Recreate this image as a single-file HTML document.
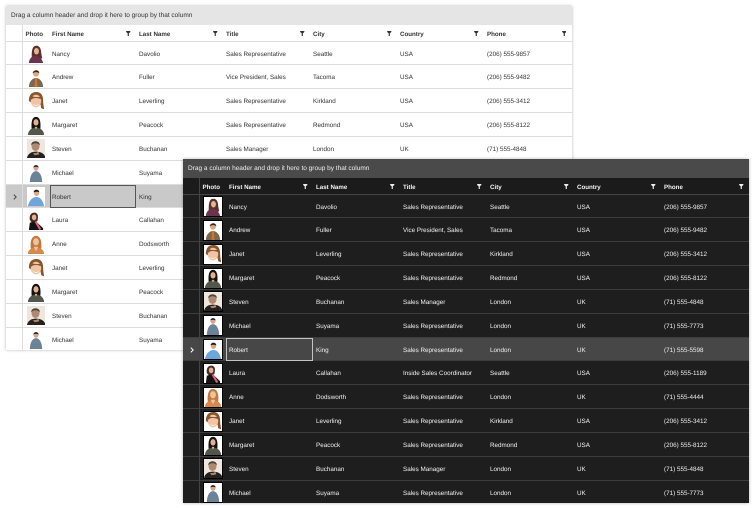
<!DOCTYPE html>
<html><head><meta charset="utf-8"><style>
html,body{margin:0;padding:0;width:754px;height:508px;overflow:hidden;background:#fff}
body{position:relative;font-family:"Liberation Sans",sans-serif;font-size:6.3px;line-height:10px;text-rendering:geometricPrecision}
.g{position:absolute;width:566px;height:344px;overflow:hidden;white-space:nowrap}
.l{left:6px;top:6px;background:#fff;color:#333;box-shadow:0 0 3px rgba(0,0,0,.28)}
.d{left:183px;top:159px;background:#1e1e1e;color:#f0f0f0;box-shadow:0 0 3px rgba(0,0,0,.3)}
.p{position:absolute;left:0;top:0;width:566px;height:18.5px;line-height:20px;text-indent:5px;font-size:6.5px}
.l .p{background:#e5e5e5}.d .p{background:#4a4a4a;color:#eee}
.h{position:absolute;left:0;top:19px;width:566px;height:16px;line-height:19px;font-weight:bold;font-size:6.2px}
.l .h{color:#333;border-bottom:1px solid #ddd}
.d .h{color:#f4f4f4;border-bottom:1px solid #444;background:#1b1b1b}
.h span{position:absolute;top:0}
.h svg{position:absolute;top:6px;width:4.5px;height:5px}
.l .h svg{fill:#333}.d .h svg{fill:#eee}
.v{position:absolute;left:16px;top:19px;width:1px;height:325px}
.l .v{background:#ddd}.d .v{background:#444}
.r{position:absolute;left:0;width:566px;height:23.85px;line-height:26px;box-sizing:border-box}
.l .r{border-bottom:1px solid #dcdcdc}.d .r{border-bottom:1px solid #3d3d3d}
.r span{position:absolute;top:0}
.r span:nth-of-type(1){left:46px}.r span:nth-of-type(2){left:133px}.r span:nth-of-type(3){left:220px}
.r span:nth-of-type(4){left:307px}.r span:nth-of-type(5){left:394px}.r span:nth-of-type(6){left:481px}
.r svg.f{position:absolute;left:21px;top:2.5px;width:18px;height:19px}
.d .r svg.f{background:#fff;outline:1px solid #000}
.l .sel{background:#c9c9c9;width:177px}.d .sel{background:#474747}
.l .sel svg.f{background:#fff}
.c{position:absolute;left:43px;top:0;width:87px;height:23px;box-sizing:border-box}
.l .c{border:1px solid #555;left:43.5px;width:86.5px;top:.5px}
.d .c{border:1px solid #c4c4c4}
.ar{position:absolute;left:6.5px;top:9px;width:4px;height:6px;fill:none;stroke-width:1.2}
.l .ar{stroke:#444}.d .ar{stroke:#fff}
</style></head><body>
<svg width="0" height="0" style="position:absolute">
<symbol id="ft" viewBox="0 0 5 6"><path d="M0 0h5v1.2L3.2 2.8V6H1.8V2.8L0 1.2z"/></symbol>
<symbol id="na" viewBox="0 0 19 21" preserveAspectRatio="none"><path d="M5 13C5 4 7 2 10 2s5 3 5 8l1 6H5z" fill="#5a3028"/><ellipse cx="10" cy="8" rx="2.600" ry="3.600" fill="#e3b598"/><path d="M2 21c0-5 4-8 7-8s7 3 8 8z" fill="#6b3350"/></symbol>
<symbol id="an" viewBox="0 0 19 21" preserveAspectRatio="none"><ellipse cx="9.500" cy="6" rx="3.200" ry="3.600" fill="#dca883"/><path d="M6 6c0-4 7-5 7 0-1-2-6-2-7 0z" fill="#33251c"/><path d="M2 21c0-6 4-10 7.500-10s7.500 4 7.500 10z" fill="#77694f"/><path d="M8.500 11h2l.5 10H8z" fill="#d9702c"/></symbol>
<symbol id="ja" viewBox="0 0 19 21" preserveAspectRatio="none"><path d="M2 10C2 2 6 0 10 0s7 3 7 9c0 5 1 8 1 10l-3-1-1-6H5z" fill="#86562e"/><ellipse cx="9.500" cy="10" rx="5.500" ry="7" fill="#efc5a4"/><path d="M6 13c2 2 5 2 7 0-1 3-6 3-7 0z" fill="#fff"/><path d="M4 4c3 2 8 2 11 1v3C11 6 6 6 4 9z" fill="#86562e"/></symbol>
<symbol id="ma" viewBox="0 0 19 21" preserveAspectRatio="none"><path d="M5 15C4 5 6 1 9.500 1S15 5 14 15z" fill="#15110f"/><ellipse cx="9.500" cy="7" rx="2.700" ry="3.500" fill="#dcb196"/><path d="M1 21c0-5 4-8 8.500-8s8.500 3 8.500 8z" fill="#53564a"/><path d="M8 12h3l-1.500 3z" fill="#dcb196"/></symbol>
<symbol id="st" viewBox="0 0 19 21" preserveAspectRatio="none"><rect width="19" height="21" fill="#efe6dd"/><ellipse cx="9" cy="8" rx="4.200" ry="5.200" fill="#b08a70"/><path d="M4.500 7C4 1 14 1 13.500 7c-2-3-7-3-9 0z" fill="#4c443e"/><path d="M0 21c1-5 5-7 9-7s8 1 10 5v2z" fill="#26211f"/><path d="M6 15c2 1 4 1 6-1l1 3-5 1z" fill="#b08a70"/></symbol>
<symbol id="mi" viewBox="0 0 19 21" preserveAspectRatio="none"><ellipse cx="9.500" cy="5.500" rx="2.700" ry="3.200" fill="#d3a78b"/><path d="M6.800 5c0-3.500 5.400-3.500 5.400 0-1.500-1-4-1-5.400 0z" fill="#2e2420"/><path d="M3 21c0-7 3-12 6.500-12S16 14 16 21z" fill="#6c8299"/></symbol>
<symbol id="ro" viewBox="0 0 19 21" preserveAspectRatio="none"><rect width="19" height="21" fill="#fff"/><ellipse cx="10" cy="6.500" rx="2.800" ry="3.400" fill="#d6a788"/><path d="M7 6c0-4 6-4 6 0-1.500-1-4.500-1-6 0z" fill="#221a16"/><path d="M1 21c1-6 5-10 9-10s7 4 8 10z" fill="#6ea6dc"/></symbol>
<symbol id="la" viewBox="0 0 19 21" preserveAspectRatio="none"><path d="M3 10C2 3 6 1 9 2s3 5 2 9l-5 3z" fill="#4a2a1c"/><ellipse cx="7.500" cy="7" rx="2.400" ry="3.200" fill="#e0b295"/><path d="M3 13l6-2 8 8v2H2z" fill="#141212"/><path d="M8 12l2-1 5 9-2 1z" fill="#d3677c"/></symbol>
<symbol id="ad" viewBox="0 0 19 21" preserveAspectRatio="none"><path d="M4 15C3 5 6 1 9.500 1S16 5 15 15z" fill="#c3773a"/><ellipse cx="9.500" cy="7.500" rx="3.100" ry="4" fill="#ecc2a2"/><path d="M1 21c0-5 4-7 8.500-7s8.500 2 8.500 7z" fill="#d88a4c"/><path d="M7 13h5l-2.500 5z" fill="#ecc2a2"/></symbol>
</svg>

<div class="g l">
<div class="p">Drag a column header and drop it here to group by that column</div>
<div class="h"><span style="left:19.500px">Photo</span><span style="left:46px">First Name</span><svg style="left:120px"><use href="#ft"/></svg><span style="left:133px">Last Name</span><svg style="left:207px"><use href="#ft"/></svg><span style="left:220px">Title</span><svg style="left:294px"><use href="#ft"/></svg><span style="left:307px">City</span><svg style="left:381px"><use href="#ft"/></svg><span style="left:394px">Country</span><svg style="left:468px"><use href="#ft"/></svg><span style="left:481px">Phone</span><svg style="left:555.500px"><use href="#ft"/></svg></div>
<div class="r" style="top:35.5px"><svg class="f"><use href="#na"/></svg><span>Nancy</span><span>Davolio</span><span>Sales Representative</span><span>Seattle</span><span>USA</span><span>(206) 555-9857</span></div>
<div class="r" style="top:59.35px"><svg class="f"><use href="#an"/></svg><span>Andrew</span><span>Fuller</span><span>Vice President, Sales</span><span>Tacoma</span><span>USA</span><span>(206) 555-9482</span></div>
<div class="r" style="top:83.2px"><svg class="f"><use href="#ja"/></svg><span>Janet</span><span>Leverling</span><span>Sales Representative</span><span>Kirkland</span><span>USA</span><span>(206) 555-3412</span></div>
<div class="r" style="top:107.05px"><svg class="f"><use href="#ma"/></svg><span>Margaret</span><span>Peacock</span><span>Sales Representative</span><span>Redmond</span><span>USA</span><span>(206) 555-8122</span></div>
<div class="r" style="top:130.9px"><svg class="f"><use href="#st"/></svg><span>Steven</span><span>Buchanan</span><span>Sales Manager</span><span>London</span><span>UK</span><span>(71) 555-4848</span></div>
<div class="r" style="top:154.75px"><svg class="f"><use href="#mi"/></svg><span>Michael</span><span>Suyama</span><span>Sales Representative</span><span>London</span><span>UK</span><span>(71) 555-7773</span></div>
<div class="r sel" style="top:178.6px"><svg class="ar" viewBox="0 0 5 7"><path d="M1 .5l3 3-3 3"/></svg><svg class="f"><use href="#ro"/></svg><div class="c"></div><span>Robert</span><span>King</span></div>
<div class="r" style="top:202.45px"><svg class="f"><use href="#la"/></svg><span>Laura</span><span>Callahan</span></div>
<div class="r" style="top:226.3px"><svg class="f"><use href="#ad"/></svg><span>Anne</span><span>Dodsworth</span></div>
<div class="r" style="top:250.15px"><svg class="f"><use href="#ja"/></svg><span>Janet</span><span>Leverling</span></div>
<div class="r" style="top:274px"><svg class="f"><use href="#ma"/></svg><span>Margaret</span><span>Peacock</span></div>
<div class="r" style="top:297.85px"><svg class="f"><use href="#st"/></svg><span>Steven</span><span>Buchanan</span></div>
<div class="r" style="top:321.7px"><svg class="f"><use href="#mi"/></svg><span>Michael</span><span>Suyama</span></div>
<div class="v"></div>
</div>

<div class="g d">
<div class="p">Drag a column header and drop it here to group by that column</div>
<div class="h"><span style="left:19.500px">Photo</span><span style="left:46px">First Name</span><svg style="left:120px"><use href="#ft"/></svg><span style="left:133px">Last Name</span><svg style="left:207px"><use href="#ft"/></svg><span style="left:220px">Title</span><svg style="left:294px"><use href="#ft"/></svg><span style="left:307px">City</span><svg style="left:381px"><use href="#ft"/></svg><span style="left:394px">Country</span><svg style="left:468px"><use href="#ft"/></svg><span style="left:481px">Phone</span><svg style="left:556px"><use href="#ft"/></svg></div>
<div class="r" style="top:35.5px"><svg class="f"><use href="#na"/></svg><span>Nancy</span><span>Davolio</span><span>Sales Representative</span><span>Seattle</span><span>USA</span><span>(206) 555-9857</span></div>
<div class="r" style="top:59.35px"><svg class="f"><use href="#an"/></svg><span>Andrew</span><span>Fuller</span><span>Vice President, Sales</span><span>Tacoma</span><span>USA</span><span>(206) 555-9482</span></div>
<div class="r" style="top:83.2px"><svg class="f"><use href="#ja"/></svg><span>Janet</span><span>Leverling</span><span>Sales Representative</span><span>Kirkland</span><span>USA</span><span>(206) 555-3412</span></div>
<div class="r" style="top:107.05px"><svg class="f"><use href="#ma"/></svg><span>Margaret</span><span>Peacock</span><span>Sales Representative</span><span>Redmond</span><span>USA</span><span>(206) 555-8122</span></div>
<div class="r" style="top:130.9px"><svg class="f"><use href="#st"/></svg><span>Steven</span><span>Buchanan</span><span>Sales Manager</span><span>London</span><span>UK</span><span>(71) 555-4848</span></div>
<div class="r" style="top:154.75px"><svg class="f"><use href="#mi"/></svg><span>Michael</span><span>Suyama</span><span>Sales Representative</span><span>London</span><span>UK</span><span>(71) 555-7773</span></div>
<div class="r sel" style="top:178.6px"><svg class="ar" viewBox="0 0 5 7"><path d="M1 .5l3 3-3 3"/></svg><svg class="f"><use href="#ro"/></svg><div class="c"></div><span>Robert</span><span>King</span><span>Sales Representative</span><span>London</span><span>UK</span><span>(71) 555-5598</span></div>
<div class="r" style="top:202.45px"><svg class="f"><use href="#la"/></svg><span>Laura</span><span>Callahan</span><span>Inside Sales Coordinator</span><span>Seattle</span><span>USA</span><span>(206) 555-1189</span></div>
<div class="r" style="top:226.3px"><svg class="f"><use href="#ad"/></svg><span>Anne</span><span>Dodsworth</span><span>Sales Representative</span><span>London</span><span>UK</span><span>(71) 555-4444</span></div>
<div class="r" style="top:250.15px"><svg class="f"><use href="#ja"/></svg><span>Janet</span><span>Leverling</span><span>Sales Representative</span><span>Kirkland</span><span>USA</span><span>(206) 555-3412</span></div>
<div class="r" style="top:274px"><svg class="f"><use href="#ma"/></svg><span>Margaret</span><span>Peacock</span><span>Sales Representative</span><span>Redmond</span><span>USA</span><span>(206) 555-8122</span></div>
<div class="r" style="top:297.85px"><svg class="f"><use href="#st"/></svg><span>Steven</span><span>Buchanan</span><span>Sales Manager</span><span>London</span><span>UK</span><span>(71) 555-4848</span></div>
<div class="r" style="top:321.7px"><svg class="f"><use href="#mi"/></svg><span>Michael</span><span>Suyama</span><span>Sales Representative</span><span>London</span><span>UK</span><span>(71) 555-7773</span></div>
<div class="v"></div>
</div>
</body></html>
